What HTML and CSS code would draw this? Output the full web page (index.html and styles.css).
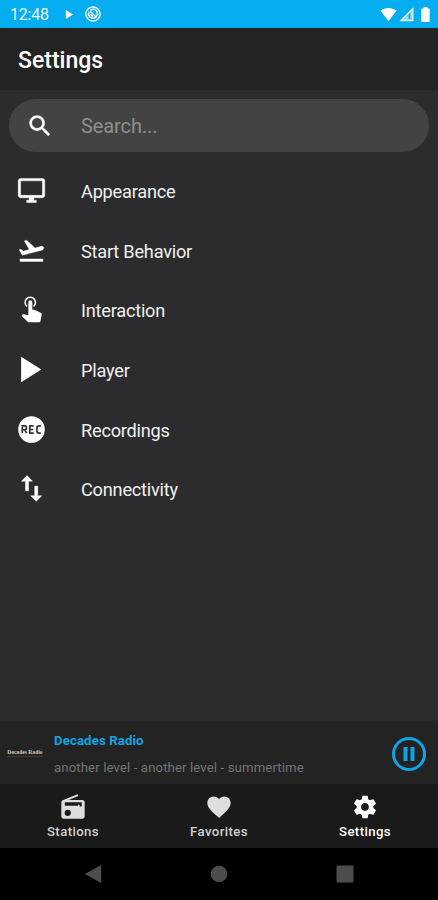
FILE: index.html
```html
<!DOCTYPE html>
<html lang="en">
<head>
<meta charset="utf-8">
<title>Settings</title>
<link rel="stylesheet" href="styles.css">
</head>
<body>
<div class="screen">
  <div class="status">
    <span class="clock">12:48</span>
    <svg class="s-play" viewBox="0 0 10 12"><path d="M1 1v10l8-5z"/></svg>
    <svg class="s-cast" viewBox="0 0 18 18"><circle cx="9" cy="9" r="7.100"/><path d="M5.200 6.800A4.300 4.300 0 1 0 12 5.800M6.500 5.200A4.300 4.300 0 0 1 13 10.500M6 6l6.500 6.500M6.200 9.500q2 .2 2.600 2.800"/></svg>
    <svg class="s-wifi" viewBox="0 0 18 15"><path d="M.5 3.600C5.600-.3 12.400-.3 17.500 3.600L9 14.500z"/></svg>
    <svg class="s-cell" viewBox="0 0 15 15"><path class="faint" d="M1 14L14 1v13z"/><path class="hole" d="M9.500 7.500l2-1.500v6h-2z"/><path class="edge" d="M2 13.500L13.800 1.700v11.800z"/></svg>
    <svg class="s-batt" viewBox="0 0 9 16"><path d="M2.500 0h4v1.500H8q1 0 1 1V15q0 1-1 1H1q-1 0-1-1V2.500q0-1 1-1h1.500z"/></svg>
  </div>
  <header class="bar"><h1>Settings</h1></header>
  <main class="content">
    <div class="search">
      <svg viewBox="0 0 24 24"><path d="M15.500 14h-.79l-.28-.27C15.410 12.590 16 11.110 16 9.500 16 5.910 13.090 3 9.500 3S3 5.910 3 9.500 5.910 16 9.500 16c1.610 0 3.090-.59 4.230-1.570l.27.28v.79l5 4.990L20.490 19l-4.990-5zm-6 0C7.010 14 5 11.990 5 9.500S7.010 5 9.500 5 14 7.010 14 9.500 11.990 14 9.500 14z"/></svg>
      <span>Search...</span>
    </div>
    <ul class="list">
      <li><svg class="bold" viewBox="0 0 24 24"><path d="M21 2H3c-1.100 0-2 .9-2 2v12c0 1.100.9 2 2 2h7v2H8v2h8v-2h-2v-2h7c1.100 0 2-.9 2-2V4c0-1.100-.9-2-2-2zm0 14H3V4h18v12z"/></svg><span>Appearance</span></li>
      <li><svg class="bold" viewBox="0 0 24 24"><path d="M2.500 19h19v2h-19zM22.070 9.640c-.21-.8-1.040-1.280-1.840-1.060L14.920 10l-6.900-6.430-1.930.51 4.140 7.170-4.970 1.330-1.970-1.540-1.450.39 2.590 4.490L21 11.490c.81-.23 1.280-1.050 1.070-1.850z"/></svg><span>Start Behavior</span></li>
      <li><svg viewBox="0 0 24 24"><path class="ring" d="M8.300 9.500a4.300 4.300 0 1 1 5.400 0"/><path d="M19.500 14.600l-5-2.300c-.3-.1-.6-.1-.9-.1H12.700V5.900a1.650 1.650 0 0 0-3.300 0V16.700l-3.800-.8c-.4-.1-.7.100-1 .3l-.8.9 5 5c.4.300.8.5 1.200.5h8c.8 0 1.300-.5 1.500-1.300l.9-5.200c.1-.7-.2-1.200-.9-1.500z"/></svg><span>Interaction</span></li>
      <li><svg viewBox="0 0 24 24"><path d="M3.400 1.500v21L20.200 12z"/></svg><span>Player</span></li>
      <li><svg viewBox="0 0 24 24"><circle cx="12" cy="12" r="11"/><path class="rec" d="M4.400 15V9h2.200q1.300 0 1.300 1.600t-1.300 1.600H4.400m2 0L8 15M13.800 9h-3.200v6h3.200M10.600 12h2.800M19.700 9h-1.400q-1.800 0-1.800 1.600v2.800q0 1.600 1.800 1.600h1.400"/></svg><span>Recordings</span></li>
      <li><svg class="bold" viewBox="0 0 24 24"><path d="M17.200 18V10h-2.600v8h-3.300l4.600 4.500L20.500 18zM8.300 1.300L3.700 6H7v8h2.600V6h3.300z"/></svg><span>Connectivity</span></li>
    </ul>
  </main>
  <section class="player">
    <div class="art"><span>Decades Radio</span></div>
    <div class="track"><strong>Decades Radio</strong><span>another level - another level - summertime</span></div>
    <svg class="pause" viewBox="0 0 36 36"><circle cx="18" cy="18" r="15.500"/><path d="M12.500 11h4v14h-4zM19.500 11h4v14h-4z"/></svg>
  </section>
  <nav class="tabs">
    <div class="tab"><svg viewBox="0 0 24 24"><path d="M3.240 6.150C2.510 6.430 2 7.170 2 8v12c0 1.100.89 2 2 2h16c1.110 0 2-.9 2-2V8c0-1.110-.89-2-2-2H8.300l8.260-3.340L15.880 1 3.240 6.150zM7.500 19.700a2.700 2.700 0 1 1 0-5.400 2.700 2.700 0 0 1 0 5.400zM19.500 11.500h-1.800V10h-1.400v1H5V8h14.500z"/></svg><span>Stations</span></div>
    <div class="tab"><svg viewBox="0 0 24 24"><path d="M12 21.350l-1.450-1.320C5.400 15.360 2 12.280 2 8.500 2 5.420 4.420 3 7.500 3c1.740 0 3.410.81 4.500 2.090C13.090 3.810 14.760 3 16.500 3 19.580 3 22 5.420 22 8.500c0 3.780-3.400 6.860-8.550 11.540L12 21.350z"/></svg><span>Favorites</span></div>
    <div class="tab on"><svg viewBox="-.5 -.5 25 25"><path d="M19.430 12.980c.04-.32.07-.64.07-.98s-.03-.66-.07-.98l2.110-1.650c.19-.15.24-.42.12-.64l-2-3.460c-.12-.22-.39-.3-.61-.22l-2.490 1c-.52-.4-1.080-.73-1.690-.98l-.38-2.650C14.460 2.180 14.250 2 14 2h-4c-.25 0-.46.18-.49.42l-.38 2.650c-.61.25-1.170.59-1.690.98l-2.490-1c-.23-.09-.49 0-.61.22l-2 3.460c-.13.22-.07.49.12.64l2.110 1.650c-.04.32-.07.65-.07.98s.03.66.07.98l-2.110 1.650c-.19.15-.24.42-.12.64l2 3.460c.12.22.39.3.61.22l2.490-1c.52.4 1.080.73 1.690.98l.38 2.650c.03.24.24.42.49.42h4c.25 0 .46-.18.49-.42l.38-2.650c.61-.25 1.170-.59 1.690-.98l2.490 1c.23.09.49 0 .61-.22l2-3.460c.12-.22.07-.49-.12-.64l-2.110-1.650zM12 15.500c-1.930 0-3.500-1.570-3.500-3.500s1.570-3.500 3.500-3.500 3.500 1.570 3.500 3.500-1.570 3.500-3.500 3.500z"/></svg><span>Settings</span></div>
  </nav>
  <div class="sysnav">
    <svg viewBox="0 0 18 20"><path d="M17.200 1v18L.8 10z"/></svg>
    <svg viewBox="0 0 18 20"><circle cx="9" cy="10" r="8.300"/></svg>
    <svg viewBox="0 0 18 20"><rect x=".5" y="1.500" width="17" height="17" rx="1"/></svg>
  </div>
</div>
</body>
</html>
```
FILE: styles.css
```css
* { box-sizing: border-box; }
body { margin: 0; background: #000; font-family: Roboto, sans-serif; color: #f0f0f0; }
svg { display: block; flex: none; fill: #fff; }
.screen { width: 438px; height: 900px; display: flex; flex-direction: column; overflow: hidden; background: #2c2c2e; }

.status { height: 28px; flex: none; display: flex; align-items: center; background: #04adef; padding: 0 8px 0 10px; }
.clock { font-size: 16px; line-height: 28px; width: 55px; color: #e8f7fe; letter-spacing: -.2px; padding-top: 1px; }
.s-play { width: 9px; height: 11px; }
.s-cast { width: 18px; height: 18px; margin-left: 10px; fill: none; stroke: #e8f7fe; stroke-width: 1.5; }
.s-wifi { width: 17px; height: 15px; margin-left: auto; }
.s-cell { width: 15px; height: 15px; margin: 1px 7px 0 2px; }
.s-cell .faint { fill: #8fdaf8; }
.s-cell .hole { fill: #04adef; }
.s-cell .edge { fill: none; stroke: #e4f6fd; stroke-width: 1.3; }
.s-batt { width: 9px; height: 15px; }

.bar { height: 62px; flex: none; display: flex; align-items: center; padding: 3px 18px 0; background: #232324; }
h1 { margin: 0; font-size: 23px; font-weight: 500; color: #fff; }

.content { height: 631px; flex: none; padding: 9px 9px 0; }
.search { height: 53px; border-radius: 27px; background: #434343; display: flex; align-items: center; padding-left: 17px; }
.search svg { width: 28px; height: 28px; stroke: #fff; stroke-width: .3; }
.search span { margin-left: 27px; font-size: 20px; letter-spacing: -.1px; color: #8f8f8f; }
.list { list-style: none; margin: 9px 0 0; padding: 0; }
.list li { height: 59.600px; display: flex; align-items: center; padding-left: 8px; }
.list svg { width: 29px; height: 29px; }
.list span { margin-left: 35px; font-size: 18.200px; letter-spacing: -.23px; padding-top: 2px; }
.bold { stroke: #fff; stroke-width: .35; }
.rec { fill: none; stroke: #333; stroke-width: 1.4; }
.ring { fill: none; stroke: #fff; stroke-width: 1.3; }

.player { height: 63px; flex: none; display: flex; align-items: center; padding: 0 11px 0 7px; background: #232324; box-shadow: 0 0 1px #202021; }
.art { width: 36px; margin-right: 11px; text-align: center; white-space: nowrap; }
.art span { display: block; font: bold 5.600px/7px "Liberation Serif", serif; color: #cfc9bd; border-bottom: 1px solid #453c30; }
.track { flex: 1; display: flex; flex-direction: column; gap: 9px; padding-top: 3px; }
.track strong { font-size: 13.200px; line-height: 18px; font-weight: 700; letter-spacing: .12px; color: #10a4e2; }
.track span { font-size: 13.200px; line-height: 18px; letter-spacing: .11px; color: #747474; white-space: nowrap; }
.pause { width: 36px; height: 36px; margin-top: 2px; fill: #10a4e2; }
.pause circle { fill: none; stroke: #10a4e2; stroke-width: 3; }

.tabs { height: 64px; flex: none; display: flex; background: #1a1a1a; }
.tab { flex: 1; display: flex; flex-direction: column; align-items: center; padding-top: 9px; font-size: 13.200px; font-weight: 500; letter-spacing: .4px; line-height: 18px; color: #d0d0d0; }
.tab svg { width: 28px; height: 28px; margin-bottom: 1.500px; fill: #dedede; }
.tab.on { color: #fff; }
.tab.on svg { fill: #fff; }

.sysnav { height: 52px; flex: none; display: flex; justify-content: center; align-items: center; gap: 108px; background: #000; }
.sysnav svg { width: 18px; height: 20px; fill: #4c4c4c; }
```
